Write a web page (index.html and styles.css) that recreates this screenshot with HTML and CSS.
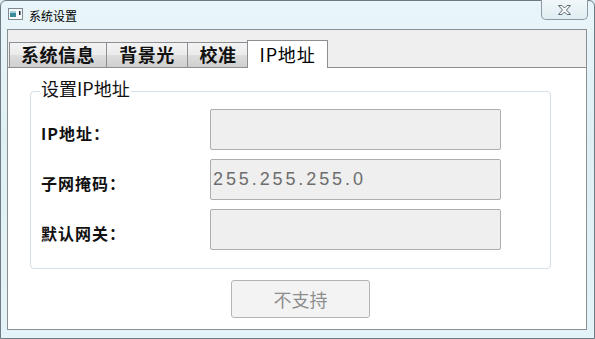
FILE: index.html
```html
<!DOCTYPE html>
<html lang="zh-CN">
<head>
<meta charset="utf-8">
<title>系统设置</title>
<link rel="stylesheet" href="styles.css">
</head>
<body>
<div class="window">
  <div class="titlebar">
    <svg class="app-icon" width="15" height="12" viewBox="0 0 15 12">
      <rect x="0.5" y="0.5" width="14" height="11" fill="#f7f9fa" stroke="#7d8a92"/>
      <rect x="2" y="3" width="6" height="6" fill="#3d8c9a"/>
      <rect x="2" y="3" width="6" height="2" fill="#9fd2d8"/>
      <rect x="11" y="3" width="1.5" height="4" fill="#1b2a33"/>
    </svg>
    <span class="title">系统设置</span>
    <div class="close-btn">
      <svg width="15" height="12" viewBox="0 0 15 12">
        <path d="M1.5 1.5 L5 1.5 L7.5 4 L10 1.5 L13.5 1.5 L9.5 6 L13.5 10.5 L10 10.5 L7.5 8 L5 10.5 L1.5 10.5 L5.5 6 Z" fill="#f4f6f7" stroke="#5f6d75" stroke-width="1" stroke-linejoin="round"/>
      </svg>
    </div>
  </div>
  <div class="client">
    <div class="tabstrip">
      <div class="tab tab-w98">系统信息</div>
      <div class="tab tab-w82">背景光</div>
      <div class="tab tab-w62">校准</div>
      <div class="tab tab-w81 active">IP地址</div>
    </div>
    <div class="panel">
      <fieldset class="group">
        <legend>设置IP地址</legend>
        <div class="row">
          <span class="label">IP地址：</span>
          <div class="field"></div>
        </div>
        <div class="row">
          <span class="label">子网掩码：</span>
          <div class="field">255.255.255.0</div>
        </div>
        <div class="row">
          <span class="label">默认网关：</span>
          <div class="field"></div>
        </div>
      </fieldset>
      <div class="actions">
        <button class="btn" disabled>不支持</button>
      </div>
    </div>
  </div>
</div>
</body>
</html>
```
FILE: styles.css
```css
* { box-sizing: border-box; }
html, body {
  margin: 0;
  padding: 0;
  width: 595px;
  height: 339px;
  overflow: hidden;
  background: #dfeff5;
  font-family: "Noto Sans CJK SC", "Liberation Sans", sans-serif;
}
.window {
  width: 595px;
  height: 339px;
  border: 1px solid #6d7b84;
  border-radius: 6px 6px 0 0;
  background: linear-gradient(to bottom, #e9f5f9 0%, #dff0f5 40%, #e4f3f7 100%);
  display: flex;
  flex-direction: column;
}
.titlebar {
  height: 28px;
  display: flex;
  align-items: flex-start;
  padding-left: 7px;
  padding-top: 7px;
  position: relative;
}
.title {
  font-size: 12px;
  line-height: 14px;
  color: #000;
  margin-left: 6px;
  margin-top: 1px;
}
.close-btn {
  position: absolute;
  right: 6px;
  top: -1px;
  width: 47px;
  height: 20px;
  border: 1px solid #8d9aa2;
  border-top: none;
  border-radius: 0 0 5px 5px;
  background: linear-gradient(to bottom, #f1f7f9, #dfeef3);
  display: flex;
  align-items: center;
  justify-content: center;
}
.client {
  margin: 0 7px 0 6px;
  height: 301px;
  border: 1px solid #8c8f91;
  background: #efefef;
  display: flex;
  flex-direction: column;
}
.tabstrip {
  display: flex;
  align-items: flex-end;
  padding: 10px 0 0 1px;
  height: 37px;
  position: relative;
  z-index: 1;
}
.tab {
  height: 25px;
  border: 1px solid #8c8e94;
  border-bottom: none;
  margin-right: -1px;
  background: linear-gradient(to bottom, #f3f3f3 0%, #ebebeb 50%, #dddddd 51%, #cfcfcf 100%);
  font-size: 18px;
  font-weight: 700;
  line-height: 23px;
  color: #111;
  text-align: center;
  letter-spacing: 0.5px;
}
.tab-w98 { width: 98px; }
.tab-w82 { width: 82px; }
.tab-w62 { width: 62px; }
.tab-w81 { width: 81px; }
.tab.active {
  height: 28px;
  background: #fff;
  font-weight: 400;
  margin-bottom: -1px;
  margin-left: -1px;
  color: #000;
  position: relative;
  z-index: 2;
  line-height: 26px;
  letter-spacing: 0.8px;
}
.panel {
  flex: 1;
  background: #fff;
  border-top: 1px solid #8c8e94;
  display: flex;
  flex-direction: column;
  padding: 0 0 0 22px;
}
.group {
  margin: 10px 0 0 0;
  width: 521px;
  height: 191px;
  border: 1px solid #d5dfe5;
  border-radius: 4px;
  padding: 5px 0 0 10px;
  display: flex;
  flex-direction: column;
  gap: 9px;
}
.group legend {
  font-size: 18px;
  line-height: 20px;
  color: #111;
  padding: 0 1px 6px 1px;
  margin-left: -1px;
}
.row {
  display: flex;
  align-items: center;
  height: 41px;
}
.label {
  width: 169px;
  font-size: 16px;
  font-weight: 700;
  color: #111;
  padding-top: 6px;
  letter-spacing: 1px;
}
.field {
  width: 291px;
  height: 41px;
  border: 1px solid #adadad;
  border-radius: 2px;
  background: #efefef;
  font-family: "Liberation Sans", sans-serif;
  font-size: 18px;
  letter-spacing: 2.9px;
  color: #6d6d6d;
  display: flex;
  align-items: center;
  padding-left: 2px;
}
.actions {
  padding: 11px 0 0 201px;
}
.btn {
  width: 139px;
  height: 38px;
  border: 1px solid #b4b4b4;
  border-radius: 3px;
  background: #f3f3f3;
  font-family: "Noto Sans CJK SC", sans-serif;
  font-size: 18px;
  color: #8d8d8d;
  padding: 0;
}
```
